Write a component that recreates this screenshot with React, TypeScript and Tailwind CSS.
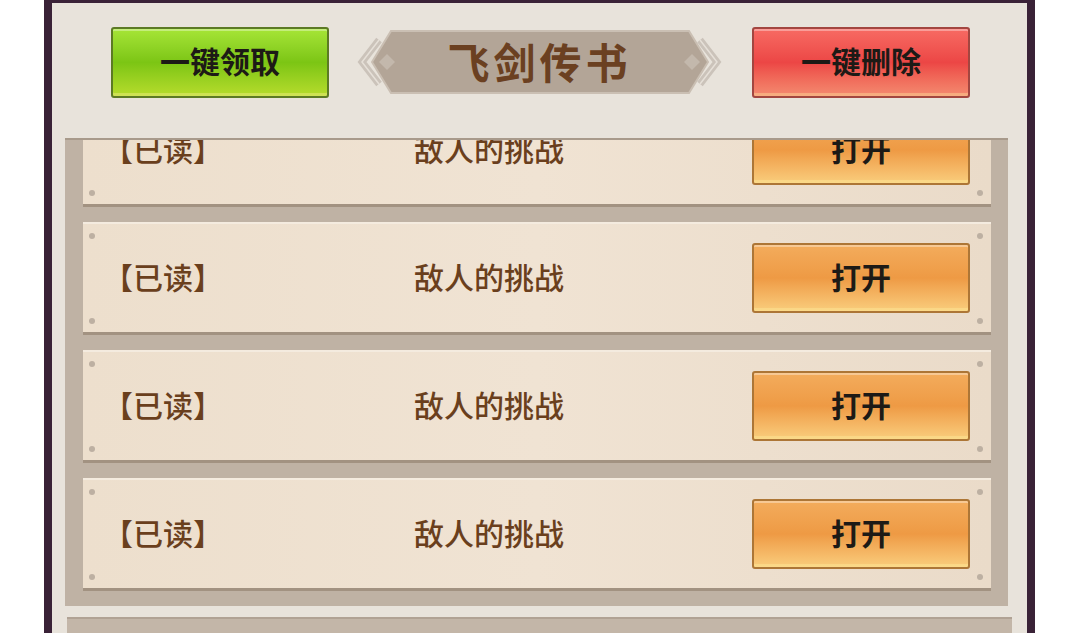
const FONT = { fontFamily: '"Noto Sans CJK SC", "Noto Sans", sans-serif' };

function GlossButton({ label, tone, className = "" }: { label: string; tone: "green" | "red" | "orange"; className?: string }) {
  const tones = {
    green: "border-[#5c7a24] bg-linear-to-b from-[#a6e536] via-[#7cc514] to-[#b6dc2c]",
    red: "border-[#a34640] bg-linear-to-b from-[#f76a63] via-[#ec4645] to-[#f38a70]",
    orange: "border-[#ad7636] bg-linear-to-b from-[#f3ac5c] via-[#ee9a44] to-[#f9cd7c]",
  };
  return (
    <div
      className={`relative flex items-center justify-center rounded-[3px] border-2 shadow-[inset_0_2px_0_rgba(255,255,255,0.35),inset_0_-3px_0_rgba(255,240,160,0.35)] ${tones[tone]} ${className}`}
    >
      <span className="-mt-[5px] text-[30px] font-bold leading-none text-[#1d1a16]" style={FONT}>
        {label}
      </span>
    </div>
  );
}

function TitleBanner() {
  return (
    <div className="relative flex h-[64px] w-[365px] items-center justify-center">
      <svg className="absolute inset-0" width="365" height="64" viewBox="0 0 365 64">
        <polyline points="22,10 5,32 22,54" fill="none" stroke="#cbc3ba" strokeWidth="7" />
        <polyline points="22,10 5,32 22,54" fill="none" stroke="#e6e0d8" strokeWidth="1.5" />
        <polyline points="343,10 360,32 343,54" fill="none" stroke="#cbc3ba" strokeWidth="7" />
        <polyline points="343,10 360,32 343,54" fill="none" stroke="#e6e0d8" strokeWidth="1.5" />
        <polygon points="15,32 34,1 332,1 351,32 332,63 34,63" fill="#b3a597" stroke="#cabfb3" strokeWidth="2" />
        <polygon points="22,32 30,24 38,32 30,40" fill="#c3b8ac" />
        <polygon points="327,32 335,24 343,32 335,40" fill="#c3b8ac" />
      </svg>
      <span className="relative -mt-[3px] text-[42px] font-bold leading-none tracking-[4px] text-[#6b4021]" style={FONT}>
        飞剑传书
      </span>
    </div>
  );
}

function Dot({ className }: { className: string }) {
  return <span className={`absolute h-[6px] w-[6px] rounded-full bg-[#bdb0a2] ${className}`} />;
}

function MailRow({ status, title }: { status: string; title: string }) {
  return (
    <div className="relative flex h-[113px] w-[908px] shrink-0 items-center border-b-[3px] border-t-2 border-b-[#a29281] border-t-[#f4ebdf] bg-[#ecdecc] bg-linear-to-r from-[#eddfcd] via-[#f0e3d3] to-[#eadbc9]">
      <Dot className="left-[6px] top-[9px]" />
      <Dot className="bottom-[8px] left-[6px]" />
      <Dot className="right-[8px] top-[9px]" />
      <Dot className="bottom-[8px] right-[8px]" />
      <span className="-mt-[4px] ml-[20px] w-[311px] text-[30px] font-medium leading-none text-[#6a3f1d]" style={FONT}>
        {status}
      </span>
      <span className="-mt-[4px] w-[338px] text-[30px] font-medium leading-none text-[#6a3f1d]" style={FONT}>
        {title}
      </span>
      <GlossButton label="打开" tone="orange" className="h-[70px] w-[218px]" />
    </div>
  );
}

export default function App() {
  const rows = Array.from({ length: 4 }, () => ({ status: "【已读】", title: "敌人的挑战" }));
  return (
    <div className="h-[633px] w-full overflow-hidden bg-white">
      <div className="ml-[44px] flex h-full w-[991px] flex-col border-x-[8px] border-t-[3px] border-[#3a2237] bg-[#e8e3db]">
        <div className="flex h-[135px] shrink-0 items-start gap-0 pl-[59px] pt-[24px]">
          <GlossButton label="一键领取" tone="green" className="h-[71px] w-[218px]" />
          <div className="ml-[28px] mt-[3px]">
            <TitleBanner />
          </div>
          <GlossButton label="一键删除" tone="red" className="ml-[30px] h-[71px] w-[218px]" />
        </div>

        <div className="ml-[13px] h-[468px] w-[943px] shrink-0 overflow-hidden border-t-2 border-[#a89a8b] bg-[#bfb2a4]">
          <div className="-mt-[46px] flex flex-col gap-[15px] pl-[18px]">
            {rows.map((r, i) => (
              <MailRow key={i} status={r.status} title={r.title} />
            ))}
          </div>
        </div>

        <div className="ml-[15px] mt-[11px] h-[30px] w-[945px] shrink-0 border-t-2 border-[#b0a294] bg-[#c3b6a8]" />
      </div>
    </div>
  );
}
